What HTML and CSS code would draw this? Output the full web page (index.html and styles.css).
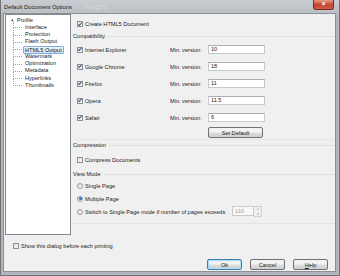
FILE: index.html
```html
<!DOCTYPE html>
<html lang="en">
<head>
    <meta charset="UTF-8">
    <title>Default Document Options</title>
    <link rel="stylesheet" href="styles.css">
</head>
<body>
    <div class="window">
        <div class="titlebar">
            <span class="title">Default Document Options</span>
            <span class="ghost">Images</span>
            <span class="close">×</span>
        </div>
        <div class="client">
            <div class="main">
                <div class="tree">
                    <div class="node root"><span class="arrow"></span>Profile</div>
                    <ul class="children">
                        <li>Interface</li>
                        <li>Protection</li>
                        <li>Flash Output</li>
                        <li><span class="selected">HTML5 Output</span></li>
                        <li>Watermark</li>
                        <li>Optimization</li>
                        <li>Metadata</li>
                        <li>Hyperlinks</li>
                        <li>Thumbnails</li>
                    </ul>
                </div>
                <div class="panel">
                    <div class="row top-row">
                        <span class="cb checked"></span>Create HTML5 Document
                    </div>
                    <div class="group-head"><span>Compatibility</span></div>
                    <div class="browser">
                        <span class="name"><span class="cb checked"></span>Internet Explorer</span>
                        <span class="min">Min. version:</span>
                        <span class="field">10</span>
                    </div>
                    <div class="browser">
                        <span class="name"><span class="cb checked"></span>Google Chrome</span>
                        <span class="min">Min. version:</span>
                        <span class="field">18</span>
                    </div>
                    <div class="browser">
                        <span class="name"><span class="cb checked"></span>Firefox</span>
                        <span class="min">Min. version:</span>
                        <span class="field">11</span>
                    </div>
                    <div class="browser">
                        <span class="name"><span class="cb checked"></span>Opera</span>
                        <span class="min">Min. version:</span>
                        <span class="field">11.5</span>
                    </div>
                    <div class="browser">
                        <span class="name"><span class="cb checked"></span>Safari</span>
                        <span class="min">Min. version:</span>
                        <span class="field">6</span>
                    </div>
                    <div class="default-row">
                        <span class="btn">Set Default</span>
                    </div>
                    <div class="group-head sep"><span>Compression</span></div>
                    <div class="row compress-row">
                        <span class="cb"></span>Compress Documents
                    </div>
                    <div class="group-head view-head"><span>View Mode</span></div>
                    <div class="row radio-row">
                        <span class="rb"></span>Single Page
                    </div>
                    <div class="row radio-row">
                        <span class="rb on"></span>Multiple Page
                    </div>
                    <div class="row radio-row">
                        <span class="rb"></span>
                        <span class="switch-label">Switch to Single Page mode if number of pages exceeds</span>
                        <span class="spin">
                            <span class="spin-field">110</span>
                            <span class="spin-btns"><span>▴</span><span>▾</span></span>
                        </span>
                    </div>
                    <div class="panel-end"></div>
                </div>
            </div>
            <div class="row footer-row">
                <span class="cb"></span>Show this dialog before each printing
            </div>
            <div class="buttons">
                <span class="btn default">Ok</span>
                <span class="btn">Cancel</span>
                <span class="btn"><u>H</u>elp</span>
            </div>
        </div>
    </div>
</body>
</html>
```

FILE: styles.css
```css
body {
    margin: 0;
    font-family: "Liberation Sans", Arial, sans-serif;
    font-size: 5.6px;
    color: #222;
    background: #fff;
}
.window {
    width: 340px;
    height: 276px;
    box-sizing: border-box;
    background: #b3b6ba;
    border: 1px solid #6f7276;
    border-top: none;
    display: flex;
    flex-direction: column;
}
.titlebar {
    flex: none;
    height: 13px;
    display: flex;
    align-items: center;
    position: relative;
    background: linear-gradient(#c9ccd0, #bcc0c4);
    padding-left: 3px;
}
.title {
    font-size: 5.8px;
    color: #202020;
}
.ghost {
    margin-left: 12px;
    color: #d4d7da;
    font-size: 7px;
}
.close {
    position: absolute;
    right: 5px;
    top: 0;
    width: 19px;
    height: 9px;
    border-radius: 0 0 3px 3px;
    background: linear-gradient(#e69a88, #c4402a 55%, #d0604a);
    border: 1px solid #7b2a22;
    border-top: none;
    color: #fff;
    font-size: 7px;
    line-height: 8px;
    text-align: center;
    font-weight: bold;
}
.client {
    flex: 1;
    min-height: 0;
    margin: 0 3px 3px 2px;
    background: #f0f0f0;
    border: 1px solid #8b8e92;
    display: flex;
    flex-direction: column;
}
.main {
    display: flex;
    gap: 2px;
    padding: 0 0 0 1px;
}
.tree {
    flex: none;
    width: 66px;
    height: 221px;
    box-sizing: border-box;
    background: #fff;
    border: 1px solid #828790;
    padding-top: 1.5px;
}
.node, .children li {
    height: 7.25px;
    line-height: 7.25px;
}
.root {
    padding-left: 5px;
    display: flex;
    align-items: center;
}
.arrow {
    width: 0;
    height: 0;
    border-left: 2px solid transparent;
    border-bottom: 2px solid #3a3a3a;
    margin-right: 4px;
}
.children {
    list-style: none;
    margin: 0;
    padding: 0 0 0 7px;
}
.children li {
    position: relative;
    padding-left: 12px;
}
.children li::before {
    content: "";
    position: absolute;
    left: 0;
    top: 50%;
    width: 9px;
    border-top: 1px dotted #a0a0a0;
}
.children li::after {
    content: "";
    position: absolute;
    left: 0;
    top: -3px;
    height: 7.25px;
    border-left: 1px dotted #a0a0a0;
}
.selected {
    display: inline-block;
    line-height: 6px;
    padding: 0 1px;
    margin-left: -2px;
    background: linear-gradient(#eaf4fd, #cde4fa);
    border: 1px solid #84acdd;
    border-radius: 1px;
}
.panel {
    flex: 1;
    display: flex;
    flex-direction: column;
}
.row {
    display: flex;
    align-items: center;
    height: 10px;
    padding-left: 4px;
}
.top-row {
    margin-top: 5px;
}
.cb {
    width: 4px;
    height: 4px;
    border: 1px solid #8e8f8f;
    background: linear-gradient(135deg, #dcdcdc, #fafafa);
    margin-right: 2px;
    position: relative;
    flex: none;
}
.cb.checked::after {
    content: "";
    position: absolute;
    left: 1px;
    top: -0.5px;
    width: 1.2px;
    height: 3px;
    border: solid #2d4e94;
    border-width: 0 1px 1px 0;
    transform: rotate(40deg);
}
.rb {
    width: 4px;
    height: 4px;
    border: 1px solid #9a9a9a;
    border-radius: 50%;
    background: linear-gradient(135deg, #d8d8d8, #fafafa);
    margin-right: 2px;
    flex: none;
    display: flex;
    align-items: center;
    justify-content: center;
}
.rb.on::after {
    content: "";
    width: 3px;
    height: 3px;
    border-radius: 50%;
    background: #2f6fc9;
}
.group-head {
    display: flex;
    align-items: center;
    height: 10px;
    margin-top: 2px;
}
.group-head::after {
    content: "";
    flex: 1;
    border-top: 1px solid #dcdfe3;
    margin-left: 3px;
}
.group-head.sep {
    margin-top: 1px;
    border-top: 1px solid #dfe8ef;
}
.compress-row {
    margin-top: 5px;
}
.group-head.view-head {
    margin-top: 4px;
}
.browser {
    display: flex;
    align-items: center;
    height: 17px;
    padding-left: 4px;
}
.browser .name {
    display: flex;
    align-items: center;
    width: 93px;
}
.browser .min {
    width: 38px;
}
.field {
    width: 51px;
    height: 7px;
    line-height: 7px;
    padding: 0 2px;
    background: #fff;
    border: 1px solid #c5c8cc;
    border-top-color: #abadb3;
}
.default-row {
    padding-left: 135px;
    height: 11px;
    margin-top: 1px;
}
.btn {
    display: inline-flex;
    align-items: center;
    justify-content: center;
    width: 53px;
    height: 9px;
    border: 1px solid #707070;
    border-radius: 2px;
    background: linear-gradient(#f2f2f2 45%, #dddddd 55%, #cfcfcf);
    box-sizing: content-box;
}
.radio-row {
    height: 13px;
}
.switch-label {
    width: 147px;
    white-space: nowrap;
}
.spin {
    display: flex;
}
.spin-field {
    width: 18px;
    height: 8px;
    line-height: 8px;
    padding-left: 2px;
    color: #a0a0a0;
    border: 1px solid #c9c9c9;
    background: #f8f8f8;
}
.spin-btns {
    display: flex;
    flex-direction: column;
    width: 7px;
    border: 1px solid #d0d0d0;
    border-left: none;
    font-size: 4px;
    line-height: 4.5px;
    text-align: center;
    color: #b0b0b0;
}
.panel-end {
    margin-top: 5px;
    border-top: 1px solid #e3e3e3;
}
.footer-row {
    margin-top: 6px;
    padding-left: 9px;
}
.buttons {
    display: flex;
    justify-content: flex-end;
    gap: 8px;
    margin-top: 8px;
    padding-right: 7px;
}
.buttons .btn {
    width: 33px;
}
.buttons .btn.default {
    border-color: #3c7fb1;
    box-shadow: inset 0 0 0 1px #a9dcf5;
}
```
